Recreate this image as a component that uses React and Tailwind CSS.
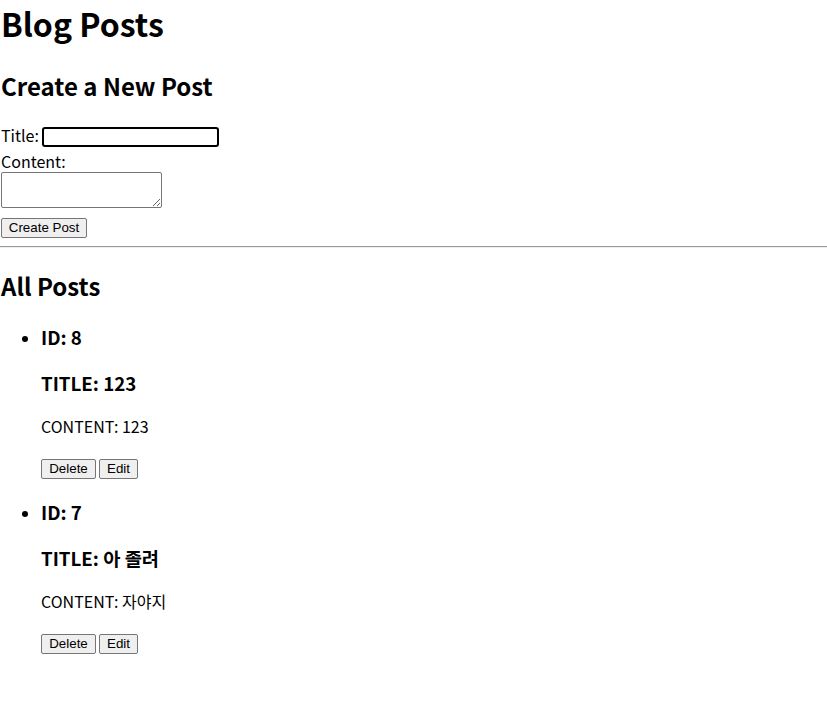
import { useState } from 'react'

const posts = [
  { id: 8, title: '123', content: '123' },
  { id: 7, title: '아 졸려', content: '자야지' },
]

const btn = "h-[20px] bg-[#efefef] border border-[#767676] rounded-[2px] text-[13.33px] leading-[16px] text-black font-['Liberation_Sans',Arial,sans-serif] flex items-center justify-center"

function PostItem({ post }) {
  return (
    <li>
      <h3 className="text-[18.72px] leading-[27.1px] font-bold mt-[18.72px] mb-[18.72px]">ID: {post.id}</h3>
      <h3 className="text-[18.72px] leading-[27.1px] font-bold mb-[18.72px]">TITLE: {post.title}</h3>
      <p className="text-[16px] leading-[23.2px] mb-[16px]">CONTENT: {post.content}</p>
      <div className="flex items-start h-[25.8px] pt-[5px]">
        <button className={`${btn} w-[55px]`}>Delete</button>
        <button className={`${btn} w-[39px] ml-[3px]`}>Edit</button>
      </div>
    </li>
  )
}

export default function App() {
  const [title, setTitle] = useState('')
  const [content, setContent] = useState('')

  return (
    <div className="min-h-screen bg-white text-black font-['Noto_Sans_CJK_KR','Noto_Sans',sans-serif]">
      <div className="pl-px">
        <h1 className="text-[32px] leading-[46.3px] font-bold mb-[22.5px]">Blog Posts</h1>

        <h2 className="text-[24px] leading-[34.75px] font-bold mb-[20px]">Create a New Post</h2>
        <form onSubmit={(e) => e.preventDefault()}>
          <div className="flex items-start h-[26px]">
            <span className="leading-[23.2px]">Title:</span>
            <input
              value={title}
              onChange={(e) => setTitle(e.target.value)}
              className="mt-[3px] ml-[3px] w-[177px] h-[20px] border-2 border-black rounded-[3px] px-[2px] text-[13.33px] outline-none"
            />
          </div>
          <div className="h-[22.5px] leading-[23px]">Content:</div>
          <textarea
            value={content}
            onChange={(e) => setContent(e.target.value)}
            className="block w-[161px] h-[36px] border border-[#767676] rounded-[2px] p-[2px] text-[13.33px]"
          />
          <button type="submit" className={`${btn} w-[86px] mt-[10px]`}>Create Post</button>
        </form>
      </div>

      <div className="mt-[8px] border-t border-b border-t-[#9a9a9a] border-b-[#eeeeee]" />

      <div className="pl-px">
        <h2 className="text-[24px] leading-[34.75px] font-bold mt-[21.2px] mb-[19px]">All Posts</h2>
        <ul className="list-disc pl-10">
          {posts.map((p) => (
            <PostItem key={p.id} post={p} />
          ))}
        </ul>
      </div>
    </div>
  )
}
